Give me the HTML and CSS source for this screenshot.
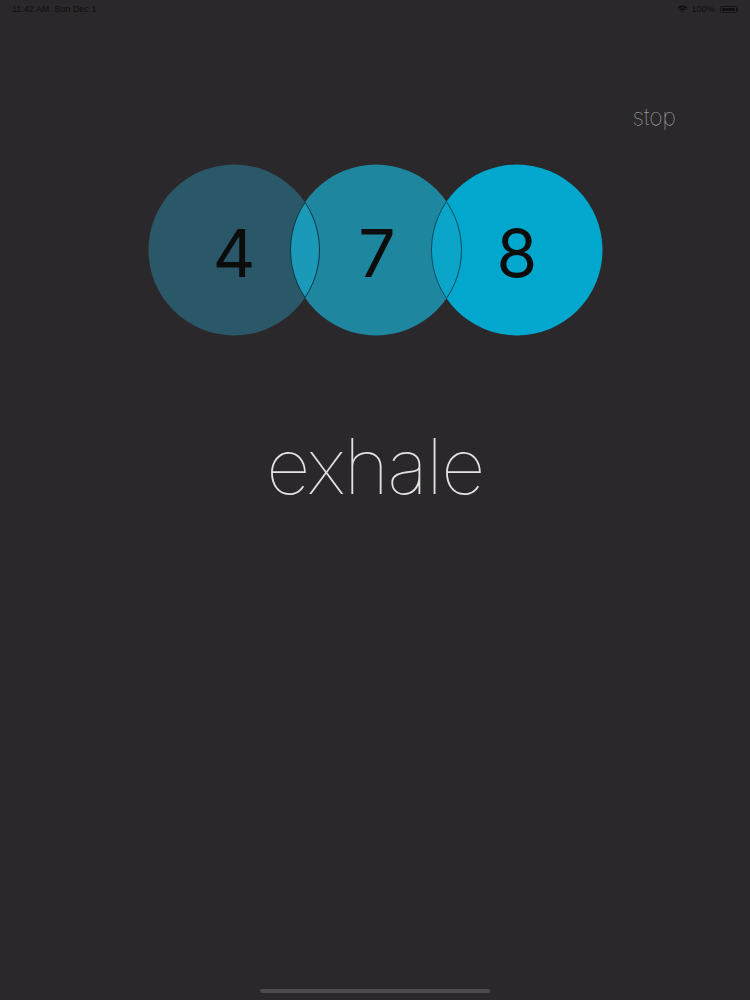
FILE: index.html
```html
<!DOCTYPE html>
<html>
<head>
<meta charset="utf-8">
<link rel="stylesheet" href="styles.css">
</head>
<body>
<div class="status">
  <div class="status-left">11:42 AM&nbsp;&nbsp;Sun Dec 1</div>
  <div class="status-right">
    <svg class="wifi" width="11" height="8" viewBox="0 0 11 8"><path d="M0.5 2.6 A7 7 0 0 1 10.5 2.6 L9.3 3.8 A5.3 5.3 0 0 0 1.7 3.8 Z M2.5 4.6 A4.2 4.2 0 0 1 8.5 4.6 L7.3 5.8 A2.5 2.5 0 0 0 3.7 5.8 Z M4.5 6.6 A1.4 1.4 0 0 1 6.5 6.6 L5.5 7.7 Z" fill="#111"/></svg>
    <span class="pct">100%</span>
    <span class="battery"><span class="battery-fill"></span></span><span class="battery-tip"></span>
  </div>
</div>
<div class="topbar"><span class="stop">stop</span></div>
<div class="circles">
  <svg width="470" height="180" viewBox="0 0 470 180">
    <defs>
      <clipPath id="c1"><circle cx="94" cy="90" r="85.5"/></clipPath>
      <clipPath id="c2"><circle cx="236" cy="90" r="85.5"/></clipPath>
      <clipPath id="c3"><circle cx="377" cy="90" r="85.5"/></clipPath>
    </defs>
    <circle cx="94" cy="90" r="85.5" fill="#2b5868"/>
    <circle cx="236" cy="90" r="85.5" fill="#1f86a0"/>
    <circle cx="377" cy="90" r="85.5" fill="#01a7cd"/>
    <g clip-path="url(#c1)">
      <circle cx="236" cy="90" r="85.5" fill="#1a9ab8" stroke="#0d3442" stroke-width="1"/>
    </g>
    <g clip-path="url(#c2)">
      <circle cx="94" cy="90" r="85.5" fill="none" stroke="#0d3442" stroke-width="1"/>
      <circle cx="377" cy="90" r="85.5" fill="#0aa5c8" stroke="#0b4a5c" stroke-width="1"/>
    </g>
    <g clip-path="url(#c3)">
      <circle cx="236" cy="90" r="85.5" fill="none" stroke="#0b4a5c" stroke-width="1"/>
    </g>
    <text class="digit" x="94" y="117">4</text>
    <text class="digit" x="237" y="117">7</text>
    <text class="digit" x="377" y="117">8</text>
  </svg>
</div>
<div class="phase">exhale</div>
<div class="home"></div>
</body>
</html>
```
FILE: styles.css
```css
html, body {
  margin: 0;
  padding: 0;
}
body {
  background: #2a282a;
  width: 750px;
  height: 1000px;
  overflow: hidden;
  position: relative;
  font-family: Inter, "Liberation Sans", sans-serif;
}
.status {
  height: 18px;
  display: flex;
  justify-content: space-between;
  align-items: center;
  padding: 0 12px 0 12px;
  font-size: 9px;
  color: #101010;
  font-family: "Liberation Sans", sans-serif;
}
.status-right {
  display: flex;
  align-items: center;
  gap: 3px;
}
.battery {
  display: inline-block;
  width: 17px;
  height: 7px;
  border: 1px solid #151515;
  border-radius: 2px;
  box-sizing: border-box;
  padding: 1px;
  margin-left: 2px;
}
.battery-fill {
  display: block;
  width: 100%;
  height: 100%;
  background: #111;
  border-radius: 1px;
}
.battery-tip {
  display: inline-block;
  width: 1.5px;
  height: 3px;
  background: #151515;
  margin-left: -3px;
}
.topbar {
  display: flex;
  justify-content: flex-end;
  padding-right: 74px;
  margin-top: 85px;
  height: 28px;
}
.stop {
  font-size: 23px;
  line-height: 28px;
  font-weight: 100;
  color: #bdbdbd;
}
.circles {
  display: flex;
  justify-content: center;
  margin-top: 29px;
}
.circles svg {
  display: block;
}
.digit {
  font-family: Inter, "Liberation Sans", sans-serif;
  font-size: 66px;
  font-weight: 400;
  fill: #0c0c0c;
  text-anchor: middle;
}
.phase {
  margin-top: 76px;
  text-align: center;
  font-size: 77px;
  line-height: 100px;
  font-weight: 100;
  color: #e2e2e2;
  letter-spacing: -1.6px;
}
.home {
  position: absolute;
  left: 260px;
  bottom: 7px;
  width: 230px;
  height: 4px;
  border-radius: 2px;
  background: #4c4b4e;
}
```
